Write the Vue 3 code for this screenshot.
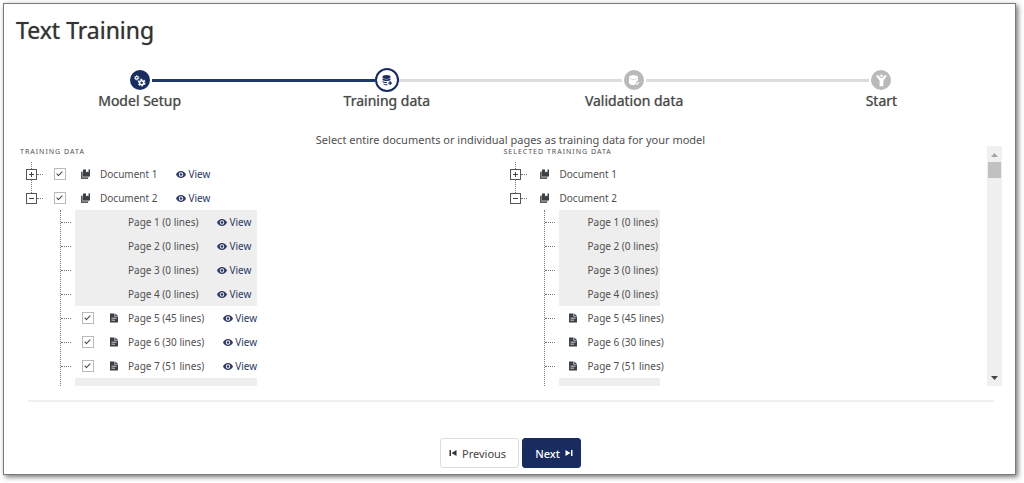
<script setup>
import { reactive } from 'vue'

const steps = [
  { label: 'Model Setup', icon: 'gears', state: 'done' },
  { label: 'Training data', icon: 'dataAdd', state: 'active' },
  { label: 'Validation data', icon: 'dataCheck', state: 'todo' },
  { label: 'Start', icon: 'funnel', state: 'todo' },
]

const pages = reactive([
  { name: 'Page 1', lines: 0, checked: false },
  { name: 'Page 2', lines: 0, checked: false },
  { name: 'Page 3', lines: 0, checked: false },
  { name: 'Page 4', lines: 0, checked: false },
  { name: 'Page 5', lines: 45, checked: true },
  { name: 'Page 6', lines: 30, checked: true },
  { name: 'Page 7', lines: 51, checked: true },
  { name: 'Page 8', lines: 0, checked: false },
])

const documents = reactive([
  { name: 'Document 1', open: false, checked: true, pages: [] },
  { name: 'Document 2', open: true, checked: true, pages },
])

const trees = [
  { title: 'Training data', selectable: true },
  { title: 'Selected training data', selectable: false },
]
</script>

<template>
  <main class="panel">
    <h1 class="title">Text Training</h1>

    <ol class="steps">
      <li v-for="step in steps" :key="step.label" class="step" :class="step.state">
        <span class="marker">
          <span class="dot">
            <svg v-if="step.icon === 'gears'" viewBox="0 0 24 24" width="13" height="13" aria-hidden="true">
              <g fill="none" stroke="#fff">
                <circle cx="7" cy="7" r="2.400" stroke-width="2" />
                <circle cx="7" cy="7" r="4" stroke-width="1.800" stroke-dasharray="1.800 1.340" />
                <circle cx="16" cy="16" r="3.700" stroke-width="2.800" />
                <circle cx="16" cy="16" r="6" stroke-width="2.400" stroke-dasharray="3.600 2.683" />
              </g>
            </svg>
            <svg v-else-if="step.icon === 'funnel'" viewBox="0 0 24 24" width="15" height="15" aria-hidden="true">
              <path fill="#fff" d="M3 4l4.500 0 2.500 3.500h4l2.500-3.500H21l-6 8.500V21H9v-8.500z" />
              <circle cx="12" cy="4.500" r="2" fill="#fff" />
            </svg>
            <svg v-else viewBox="0 0 24 24" width="12" height="12" aria-hidden="true">
              <g v-if="step.icon === 'dataAdd'" fill="currentColor">
                <ellipse cx="11" cy="6" rx="8" ry="3.800" />
                <path d="M3 8.500c2 3 14 3 16 0V12c-3 2.600-13 2.600-16 0z" />
                <path d="M3 14c2 1.700 6 2.200 9 1.900v2.300c-4 .2-8-.5-9-2z" />
                <path d="M5 19.500c2 1.100 5 1.300 8 1.100V22.500c-4 .2-7-.5-8-1.500z" />
                <path d="M17 14h2.500v2.800H22v2.500h-2.500V22H17v-2.700h-2.500v-2.500H17z" />
              </g>
              <g v-else fill="currentColor">
                <path d="M2 6c0-5 18-5 18 0v7l-6 6-1 3C8 22.500 2 21 2 18z" />
                <path d="M14 19l1.500-1.500 2 2 4-4L23 17l-5.500 5.500z" />
                <path fill="#b9b9b9" d="M3 8c3 2.500 13 2.500 16 0v1c-3 2.500-13 2.500-16 0z" />
              </g>
            </svg>
          </span>
        </span>
        <span class="step-label">{{ step.label }}</span>
      </li>
    </ol>

    <p class="hint">Select entire documents or individual pages as training data for your model</p>

    <div class="scroller">
      <div class="viewport">
        <section v-for="tree in trees" :key="tree.title" class="tree" :class="{ selectable: tree.selectable }">
          <h2 class="tree-title">{{ tree.title }}</h2>
          <ul class="documents">
            <li v-for="doc in documents" :key="doc.name" class="document">
              <div class="row doc-row">
                <button
                  class="toggle"
                  type="button"
                  :class="{ open: doc.open }"
                  :aria-label="(doc.open ? 'Collapse ' : 'Expand ') + doc.name"
                  :aria-expanded="doc.open"
                  @click="doc.open = !doc.open"
                ></button>
                <div class="entry">
                  <input v-if="tree.selectable" v-model="doc.checked" class="check" type="checkbox" :aria-label="doc.name" />
                  <svg class="kind" viewBox="0 0 20 20" width="10" height="10" aria-hidden="true">
                    <path fill="#8d8880" d="M1 5h3v10h11v3H1z" />
                    <path fill="#55585d" d="M0 6h2v12h12v2H0z" />
                    <path fill="#3b3f46" d="M4 1h6v6l2.500-2L15 7V1h3v14H4z" />
                  </svg>
                  <span class="name">{{ doc.name }}</span>
                  <a v-if="tree.selectable" class="view" href="#">
                    <svg viewBox="0 0 20 14" width="10" height="7" aria-hidden="true">
                      <path fill="#2b3a66" fill-rule="evenodd" d="M10 0c4.500 0 8 2.800 10 7-2 4.200-5.500 7-10 7S2 11.200 0 7c2-4.200 5.500-7 10-7zm0 2.500a4.500 4.500 0 100 9 4.500 4.500 0 000-9z" />
                      <circle cx="10" cy="7" r="2.600" fill="#2b3a66" />
                    </svg>View</a>
                </div>
              </div>
              <ul v-if="doc.open" class="pages">
                <li v-for="page in doc.pages" :key="page.name" class="row page-row">
                  <div class="entry" :class="{ empty: !page.lines }">
                    <template v-if="page.lines">
                      <input v-if="tree.selectable" v-model="page.checked" class="check" type="checkbox" :aria-label="page.name" />
                      <svg class="kind" viewBox="0 0 20 20" width="10" height="10" aria-hidden="true">
                        <path fill="#3b3f46" fill-rule="evenodd" d="M2 1h9v6h7v12H2zm3 8.500V11h10V9.500zm0 4V15h7v-1.500z" />
                        <path fill="#3b3f46" d="M12.500 1L18 6h-5.500z" />
                      </svg>
                    </template>
                    <span class="name">{{ page.name }} ({{ page.lines }} lines)</span>
                    <a v-if="tree.selectable" class="view" href="#">
                      <svg viewBox="0 0 20 14" width="10" height="7" aria-hidden="true">
                        <path fill="#2b3a66" fill-rule="evenodd" d="M10 0c4.500 0 8 2.800 10 7-2 4.200-5.500 7-10 7S2 11.200 0 7c2-4.200 5.500-7 10-7zm0 2.500a4.500 4.500 0 100 9 4.500 4.500 0 000-9z" />
                        <circle cx="10" cy="7" r="2.600" fill="#2b3a66" />
                      </svg>View</a>
                  </div>
                </li>
              </ul>
            </li>
          </ul>
        </section>
      </div>
      <div class="scrollbar" aria-hidden="true">
        <svg viewBox="0 0 15 16" width="15" height="16"><path fill="#a3a3a3" d="M4 11l3.500-4L11 11z" /></svg>
        <span class="thumb"></span>
        <svg class="down" viewBox="0 0 15 16" width="15" height="16"><path fill="#444" d="M4 6h7l-3.500 4z" /></svg>
      </div>
    </div>

    <hr class="rule" />

    <div class="actions">
      <button class="btn" type="button">
        <svg viewBox="0 0 16 16" width="8" height="8" aria-hidden="true"><path fill="#333" d="M1 2h3v12H1zM15 2v12L5 8z" /></svg>
        Previous
      </button>
      <button class="btn primary" type="button">
        Next
        <svg viewBox="0 0 16 16" width="8" height="8" aria-hidden="true"><path fill="#fff" d="M12 2h3v12h-3zM1 2v12l10-6z" /></svg>
      </button>
    </div>
  </main>
</template>

<style>
body {
  background: #fff;
}
</style>

<style scoped>
.panel {
  box-sizing: border-box;
  min-height: calc(100vh - 11px);
  margin: 3px 8px 8px 3px;
  padding: 10px 10px 6px 12px;
  border: 1px solid #7a7a7a;
  background: #fff;
  box-shadow: 2px 2px 5px rgba(0, 0, 0, 0.55);
  color: #505050;
  font-family: "Noto Sans", "Open Sans", sans-serif;
  font-size: 10px;
}
ul,
ol {
  margin: 0;
  padding: 0;
  list-style: none;
}
.title {
  margin: 0;
  color: #333;
  font-size: 23px;
  font-weight: 400;
  line-height: 32px;
  text-shadow: 0 0 1px #777;
}
.steps {
  display: flex;
  padding-top: 22px;
}
.step {
  display: flex;
  flex: 1;
  flex-direction: column;
  color: #484848;
}
.marker {
  display: flex;
  align-items: center;
  height: 24px;
}
.marker::before,
.marker::after {
  flex: 1;
  height: 3px;
  background: #dcdcdc;
  content: "";
}
.done .marker::after,
.active .marker::before {
  background: #1f3a68;
}
.step:first-child .marker::before,
.step:last-child .marker::after {
  background: none;
}
.dot {
  display: flex;
  box-sizing: border-box;
  align-items: center;
  justify-content: center;
  width: 20px;
  height: 20px;
  margin: 0 2px;
  border-radius: 50%;
  background: #b9b9b9;
  color: #fff;
}
.done .dot {
  background: #182c60;
}
.active .dot {
  width: 24px;
  height: 24px;
  margin: 0;
  border: 2px solid #182c60;
  background: #fff;
  color: #182c60;
}
.step-label {
  font-size: 14px;
  line-height: 18px;
  text-align: center;
  text-shadow: 0 0 1px #888;
}
.hint {
  margin: 23px 0 0;
  font-size: 11px;
  line-height: 14px;
  text-align: center;
}
.scroller {
  display: flex;
  height: 240px;
  margin: -1px 3px 0 4px;
}
.viewport {
  display: grid;
  flex: 1;
  grid-template-columns: 1fr 1fr;
  overflow: hidden;
}
.tree-title {
  margin: 0;
  font-size: 7px;
  font-weight: 400;
  letter-spacing: 1px;
  line-height: 12px;
  text-transform: uppercase;
}
.documents {
  padding-top: 4px;
}
.row {
  display: flex;
  align-items: center;
  height: 24px;
}
.toggle {
  position: relative;
  box-sizing: border-box;
  width: 11px;
  height: 11px;
  margin: 0 10px 0 6px;
  padding: 0;
  border: 1px solid #555;
  background:
    linear-gradient(#444, #444) center / 5px 1px no-repeat,
    linear-gradient(#444, #444) center / 1px 5px no-repeat,
    #fff;
}
.toggle.open {
  background: linear-gradient(#444, #444) center / 5px 1px no-repeat, #fff;
}
.toggle::before {
  position: absolute;
  top: 4px;
  left: 10px;
  width: 6px;
  border-top: 1px dotted #777;
  content: "";
}
.toggle::after {
  position: absolute;
  bottom: 10px;
  left: 4px;
  height: 13px;
  border-left: 1px dotted #777;
  content: "";
}
.document:first-child .toggle::after {
  height: 7px;
}
.entry {
  display: flex;
  align-items: center;
  height: 24px;
  padding-left: 9px;
}
.selectable .entry {
  padding-left: 7px;
}
.check {
  position: relative;
  box-sizing: border-box;
  width: 12px;
  height: 12px;
  margin: 0 15px 0 0;
  border: 1px solid #bbb;
  background: #fff;
  appearance: none;
}
.check:checked::after {
  position: absolute;
  top: 1px;
  left: 3px;
  width: 2px;
  height: 5px;
  border: solid #444;
  border-width: 0 1px 1px 0;
  content: "";
  transform: rotate(45deg);
}
.kind {
  margin-right: 10px;
}
.selectable .kind {
  margin-right: 9px;
}
.view {
  display: flex;
  gap: 2px;
  align-items: center;
  margin-left: 19px;
  color: #2b3a66;
  text-decoration: none;
}
.pages {
  width: max-content;
  margin-left: 40px;
  border-left: 1px dotted #777;
}
.page-row::before {
  width: 10px;
  margin-right: 4px;
  border-top: 1px dotted #777;
  content: "";
}
.page-row .entry {
  flex: 1;
}
.page-row .entry.empty {
  flex: none;
  padding-right: 2px;
  padding-left: 29px;
  background: #eee;
}
.selectable .page-row .entry.empty {
  flex: 1;
  padding-left: 53px;
}
.scrollbar {
  display: flex;
  flex-direction: column;
  width: 15px;
  background: #f0f0f0;
}
.thumb {
  height: 16px;
  margin: 0 1px;
  background: #c1c1c1;
}
.down {
  margin-top: auto;
}
.rule {
  height: 2px;
  margin: 14px 11px 0 12px;
  border: 0;
  background: #efefef;
}
.actions {
  display: flex;
  gap: 3px;
  justify-content: center;
  margin-top: 36px;
}
.btn {
  display: flex;
  box-sizing: border-box;
  gap: 5px;
  align-items: center;
  justify-content: center;
  height: 30px;
  padding: 0 12px 0 8px;
  border: 1px solid #ddd;
  border-radius: 3px;
  background: #fff;
  color: #444;
  font: 11px "Noto Sans", "Open Sans", sans-serif;
}
.primary {
  padding: 0 7px 0 12px;
  border-color: #182c60;
  background: #182c60;
  color: #fff;
  font-weight: 500;
}
</style>
